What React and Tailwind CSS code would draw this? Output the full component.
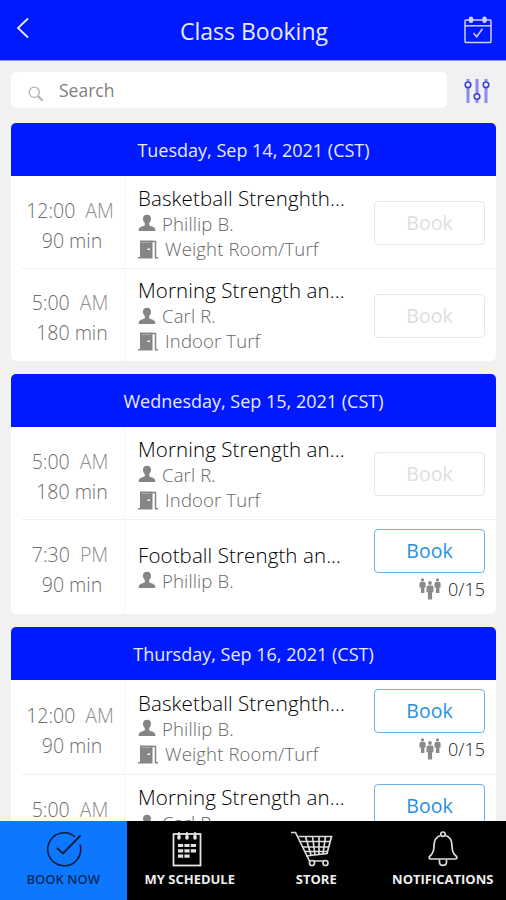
import React from "react";

const days = [
  {
    date: "Tuesday, Sep 14, 2021 (CST)",
    classes: [
      { time: "12:00", period: "AM", length: "90 min", title: "Basketball Strenghth...", coach: "Phillip B.", room: "Weight Room/Turf" },
      { time: "5:00", period: "AM", length: "180 min", title: "Morning Strength an...", coach: "Carl R.", room: "Indoor Turf" },
    ],
  },
  {
    date: "Wednesday, Sep 15, 2021 (CST)",
    classes: [
      { time: "5:00", period: "AM", length: "180 min", title: "Morning Strength an...", coach: "Carl R.", room: "Indoor Turf" },
      { time: "7:30", period: "PM", length: "90 min", title: "Football Strength an...", coach: "Phillip B.", spots: "0/15" },
    ],
  },
  {
    date: "Thursday, Sep 16, 2021 (CST)",
    classes: [
      { time: "12:00", period: "AM", length: "90 min", title: "Basketball Strenghth...", coach: "Phillip B.", room: "Weight Room/Turf", spots: "0/15" },
      { time: "5:00", period: "AM", length: "180 min", title: "Morning Strength an...", coach: "Carl R.", room: "Indoor Turf", spots: "0/15" },
    ],
  },
];

const PersonIcon = () => (
  <svg width="18" height="18" viewBox="0 0 18 18" fill="#858585" className="shrink-0">
    <path d="M9 .8c2.600 0 4 1.600 4 3.900 0 1.800-.8 3.200-1.800 4.300v2c0 1.300 6.100 1.500 6.100 4.600V17H.7v-1.400c0-3.100 6.100-3.300 6.100-4.600V9C5.800 7.900 5 6.500 5 4.700 5 2.400 6.400.8 9 .8z" />
  </svg>
);

const DoorIcon = () => (
  <svg width="20" height="19" viewBox="0 0 20 19" className="shrink-0">
    <path d="M2 .5h12.500V18.500H0V17h2z" fill="#858585" />
    <path d="M3.500 2.500h9" stroke="#b5b5b5" strokeWidth=".8" />
    <path d="M9.500 9.200h2.500" stroke="#fff" strokeWidth="1.600" />
    <path d="M14 1.500h3.500v16.300H20" fill="none" stroke="#858585" strokeWidth="1.500" />
  </svg>
);

const PeopleIcon = () => (
  <svg width="22" height="22" viewBox="0 0 22 22" fill="#8a8a8a">
    <circle cx="3.500" cy="1.900" r="1.600" />
    <path d="M1.200 4h4.600l.8 1.200v4.300H5.400V15H1.900V9.500H.5V5.200z" />
    <circle cx="18.500" cy="1.900" r="1.600" />
    <path d="M16.200 4h4.600l.8 1.200v4.300h-1.200V15h-3.500V9.500h-1.400V5.200z" />
    <circle cx="11" cy="5" r="1.900" />
    <path d="M8.700 7.500h4.600l1.200 1.200v5.500h-1.400v7.300H8.900v-7.300H7.500V8.700z" />
  </svg>
);

const SearchIcon = () => (
  <svg width="16" height="16" viewBox="0 0 16 16" fill="none" stroke="#b4b4b4">
    <circle cx="6.300" cy="6.300" r="5.100" strokeWidth="1.300" />
    <path d="M10 10l4.600 4.600" strokeWidth="2.200" />
  </svg>
);

const CalendarIcon = () => (
  <svg width="28" height="28" viewBox="0 0 28 28" fill="none" stroke="#cdd1ff" strokeWidth="1.500">
    <rect x="1" y="4" width="26" height="22.500" rx="1" />
    <path d="M1 9.800h26" />
    <rect x="5.500" y="1.300" width="3" height="5" rx="1.500" fill="#cdd1ff" />
    <rect x="19" y="1.300" width="3" height="5" rx="1.500" fill="#cdd1ff" />
    <path d="M9.500 17l3.200 3.800 5.800-8" />
  </svg>
);

const FilterIcon = () => (
  <svg width="26" height="26" viewBox="0 0 26 26" fill="none" stroke="#3a3be0">
    <path d="M4 1v2.500M4 9.500V25M13 1v15M13 22v3M22 1v2.500M22 9.500V25" strokeWidth="3" stroke="#8a8af0" />
    <g strokeWidth="1.600">
      <circle cx="4" cy="6.800" r="2.800" />
      <circle cx="13" cy="18.500" r="2.800" />
      <circle cx="22" cy="6.800" r="2.800" />
    </g>
  </svg>
);

const BookNowIcon = () => (
  <svg width="36" height="36" viewBox="0 0 36 36" fill="none" stroke="#071d3d" strokeWidth="1.600" className="ml-0.5">
    <path d="M29 5.800A16.500 16.500 0 1 0 34 13.500" />
    <path d="M11 17l6 5.500L34.500 4.500" strokeWidth="1.900" />
  </svg>
);

const ScheduleIcon = () => (
  <svg width="30" height="36" viewBox="0 0 30 36" fill="none" stroke="#e4e4e4" className="-ml-1.5">
    <rect x="1.500" y="3" width="27" height="31.500" strokeWidth="1.800" />
    <path d="M7 1v5M15 1v5M23 1v5" strokeWidth="1.500" />
    <path d="M7 5.500v1.500M15 5.500v1.500M23 5.500v1.500" strokeWidth="3.500" strokeLinecap="round" />
    <path d="M6 14.500h18M6 19.800h18M6 25.200h12" strokeWidth="3.200" strokeDasharray="5.200 1.200" />
  </svg>
);

const StoreIcon = () => (
  <svg width="42" height="36" viewBox="0 0 42 36" fill="none" stroke="#dcdcdc" strokeWidth="1.700" className="-ml-2">
    <path d="M0 1.500h4.500L18.500 30h18" />
    <path d="M7.500 5.500h33L36 22.500 15 25" />
    <path d="M9.500 10.500h30M12 16h26M14 20.500h23M14.500 5.500L20 24M21.500 5.500L24 24M28 5.500V23.500M34.500 5.500L32 23" />
    <circle cx="21" cy="32" r="2.500" fill="#000" />
    <circle cx="34.500" cy="32" r="2.500" fill="#000" />
  </svg>
);

const BellIcon = () => (
  <svg width="30" height="36" viewBox="0 0 30 36" fill="none" stroke="#dcdcdc" strokeWidth="1.700">
    <path d="M12.500 4.500C7.500 6 6 10 6 15c0 5.500-1.500 8-4 10-1.500 1.200-1 3 1 3h24c2 0 2.500-1.800 1-3-2.500-2-4-4.500-4-10 0-5-1.500-9-6.500-10.500" />
    <circle cx="15" cy="3.200" r="2.200" />
    <path d="M11.500 28.500v2.500c0 4.500 7 4.500 7 0v-2.500" />
  </svg>
);

const ClassRow = ({ item }) => (
  <div className={`flex ${item.spots ? "h-[94.5px]" : "h-[92.5px]"}`}>
    <div className="flex w-[114px] shrink-0 flex-col items-center justify-center border-r border-[#f3f5f5] pt-[7px] pl-[5px] text-[19.5px] leading-[30px] font-light text-[#6c6c6c]">
      <div className="whitespace-nowrap">
        {item.time}
        <span className="ml-2.5 text-[#8e8e8e]">{item.period}</span>
      </div>
      <div className="pl-1">{item.length}</div>
    </div>
    <div className="flex flex-1 flex-col justify-center pt-0.5 pl-[13px] text-[18.5px] leading-[25px] font-light text-[#666]">
      <div className="whitespace-nowrap text-[20.5px] tracking-[0.1px] text-black">{item.title}</div>
      <div className="flex items-center gap-1.5 tracking-[0.15px]">
        <PersonIcon />
        {item.coach}
      </div>
      {item.room && (
        <div className="flex h-[25px] items-center gap-[7px] tracking-[0.15px]">
          <span className="pt-0.5">
            <DoorIcon />
          </span>
          {item.room}
        </div>
      )}
    </div>
    <div className="flex w-[122px] shrink-0 flex-col items-end pr-[11px]">
      <button
        className={`h-11 w-[111px] rounded-sm border-[1.5px] text-[19.5px] ${
          item.spots ? "mt-[9px] border-[#6cb0ee] text-[#2590e6]" : "mt-[25px] border-[#e6e6e6] text-[#dedede]"
        }`}
      >
        Book
      </button>
      {item.spots && (
        <div className="mt-[5px] flex items-center gap-[7px] text-[18px] leading-[22px] font-light text-[#222]">
          <PeopleIcon />
          {item.spots}
        </div>
      )}
    </div>
  </div>
);

const NavItem = ({ icon, label, active }) => (
  <div className={`flex flex-1 flex-col items-center pt-2.5 ${active ? "bg-[#0d78ff] text-[#062a5c]" : "bg-black text-[#eee]"}`}>
    {icon}
    <span className={`mt-[3px] whitespace-nowrap text-[13px] leading-[18px] ${active ? "font-semibold" : "font-bold"}`}>{label}</span>
  </div>
);

const App = () => {
  return (
    <div className="flex h-[900px] w-[506px] flex-col overflow-hidden bg-[#f1f1f1] font-['Open_Sans',sans-serif]">
      {/* Header */}
      <header className="flex h-[61px] shrink-0 items-center justify-between border-b border-[#8d97f5] bg-[#0019ff] pr-3.5 pl-4">
        <svg width="28" height="22" viewBox="0 0 28 22" fill="none" stroke="#e6e8ff" strokeWidth="1.800" className="-mt-1">
          <path d="M12 1.500L2 11l10 9.500" />
        </svg>
        <h1 className="pt-0.5 text-[23px] text-[#e8eaff]">Class Booking</h1>
        <CalendarIcon />
      </header>

      {/* Search */}
      <div className="flex shrink-0 items-center pt-[11px] pr-4 pl-[11px]">
        <div className="flex h-9 w-[436px] items-center rounded-md bg-white pl-[17px] text-[17.5px] text-[#808080]">
          <span className="pt-2">
            <SearchIcon />
          </span>
          <span className="pl-[15px]">Search</span>
        </div>
        <div className="ml-auto pt-0.5">
          <FilterIcon />
        </div>
      </div>

      {/* Classes by day */}
      <main className="flex min-h-0 flex-1 flex-col gap-[13px] overflow-hidden pt-[15px] pr-2.5 pl-[11px]">
        {days.map((day) => (
          <section key={day.date} className="shrink-0 overflow-hidden rounded-[5px] bg-white">
            <h2 className="flex h-[53px] items-center justify-center bg-[#0019ff] text-lg font-medium text-[#e8eaff]">
              {day.date}
            </h2>
            {day.classes.map((item, i) => (
              <div key={i}>
                {i > 0 && <div className="-mt-px ml-[11px] h-px bg-[#eef0f0]" />}
                <ClassRow item={item} />
              </div>
            ))}
          </section>
        ))}
      </main>

      {/* Bottom navigation */}
      <nav className="flex h-[79px] shrink-0">
        <NavItem icon={<BookNowIcon />} label="BOOK NOW" active />
        <NavItem icon={<ScheduleIcon />} label="MY SCHEDULE" />
        <NavItem icon={<StoreIcon />} label="STORE" />
        <NavItem icon={<BellIcon />} label="NOTIFICATIONS" />
      </nav>
    </div>
  );
};

export default App;
